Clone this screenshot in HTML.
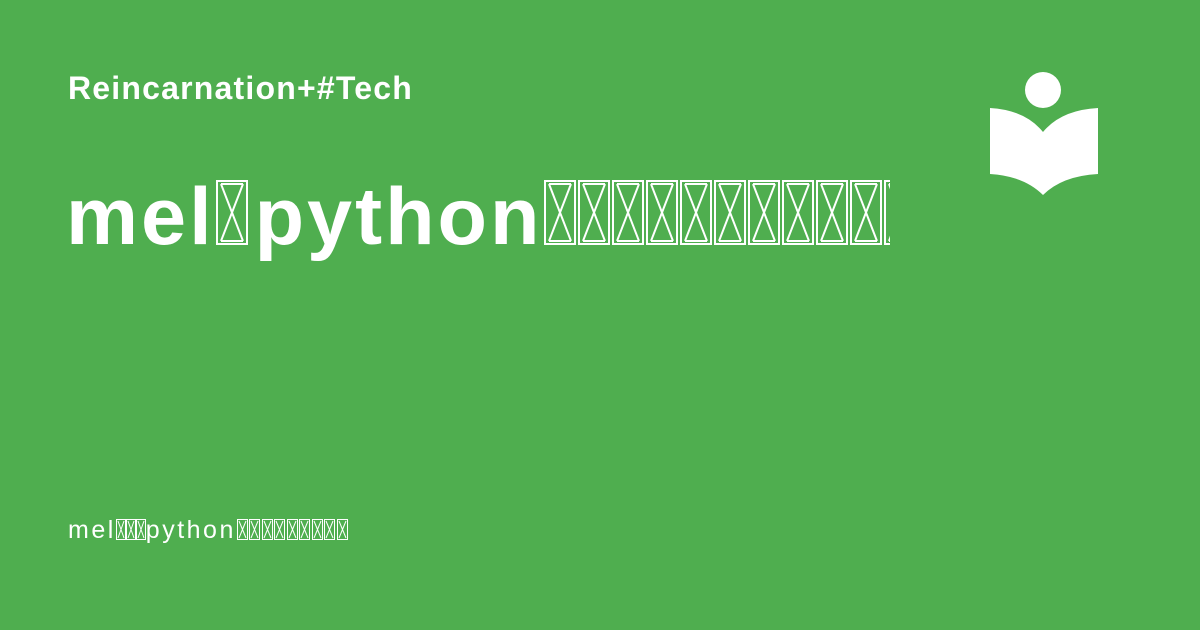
<!DOCTYPE html>
<html><head><meta charset="utf-8"><style>
body{margin:0;width:1200px;height:630px;background:#4fae4f;overflow:hidden;font-family:"Liberation Sans",sans-serif;color:#fff;position:relative}
.h{position:absolute;left:68px;top:70px;font-size:32px;font-weight:bold;letter-spacing:1.2px}
.t{position:absolute;left:66px;top:172px;width:824px;height:90px;overflow:hidden;white-space:nowrap;font-size:81px;font-weight:bold;line-height:90px;letter-spacing:3px}
.b{display:inline-block;vertical-align:baseline}
.s{position:absolute;left:68px;top:515px;font-size:25px;letter-spacing:2.5px;white-space:nowrap;line-height:30px}
</style></head><body>
<div class="h">Reincarnation+#Tech</div>
<div class="t">mel<svg class="b" width="34" height="66" viewBox="0 0 34 66" style="margin:0 6px -2px 0"><g fill="none" stroke="#fff" stroke-width="2"><rect x="2" y="1" width="30" height="63"/><path d="M6 4L28 61M28 4L6 61M6 4h22M6 61h22"/></g></svg>python<span id="bx"></span></div>
<div class="s">mel<span id="s1"></span>python<span id="s2"></span></div>
<svg style="position:absolute;left:985px;top:68px" width="120" height="132" viewBox="985 68 120 132">
<circle cx="1043" cy="90" r="18" fill="#fff"/>
<path d="M990 108 Q1025 110 1043 132 Q1061 110 1098 108 V174 Q1062 176 1043 195 Q1024 176 990 174 Z" fill="#fff"/>
</svg>
<script>
var big='<svg class="b" width="34" height="66" viewBox="0 0 34 66" style="margin:0 0 -2px 0"><g fill="none" stroke="#fff" stroke-width="2"><rect x="2" y="1" width="30" height="63"/><path d="M6 4L28 61M28 4L6 61M6 4h22M6 61h22"/></g></svg>';
document.getElementById('bx').innerHTML=big.repeat(11);
var sm='<svg class="b" width="10" height="22" viewBox="0 0 10 22" style="margin:0 0 -3px 0"><g fill="none" stroke="#fff" stroke-width="1"><rect x="0.5" y="0.5" width="9" height="20"/><path d="M2 2L8 19M8 2L2 19"/></g></svg>';
var sm2='<svg class="b" width="12.5" height="22" viewBox="0 0 12.5 22" style="margin:0 0 -3px 0"><g fill="none" stroke="#fff" stroke-width="1"><rect x="1.5" y="0.5" width="10" height="20"/><path d="M3 2L10 19M10 2L3 19"/></g></svg>';
document.getElementById('s1').innerHTML=sm.repeat(3);
document.getElementById('s2').innerHTML=sm2.repeat(9);
</script>
</body></html>
